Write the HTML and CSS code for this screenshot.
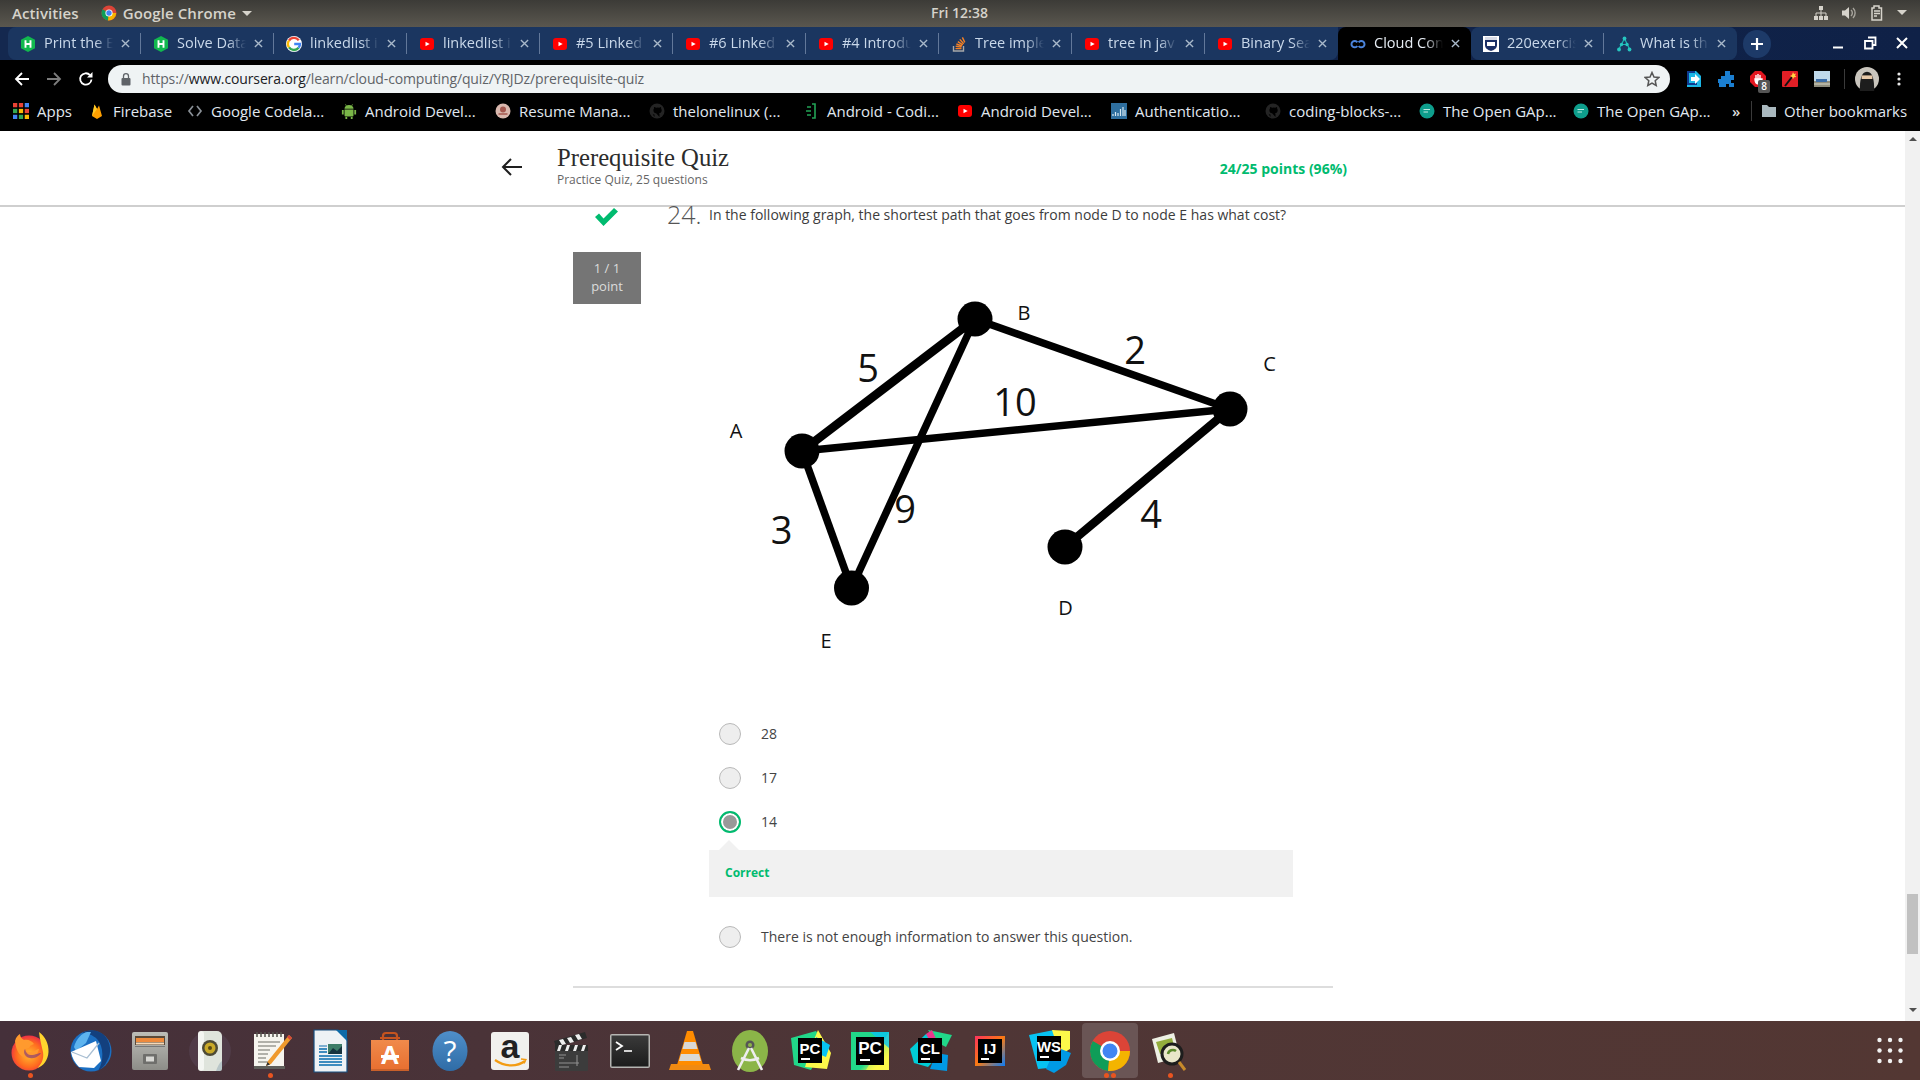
FILE: index.html
```html
<!DOCTYPE html>
<html lang="en">
<head>
<meta charset="utf-8">
<title>Prerequisite Quiz</title>
<link rel="stylesheet" href="styles.css">
</head>
<body>
<svg class="sprite" aria-hidden="true">
  <defs>
    <linearGradient id="pc2" x1="0" y1="0" x2="1" y2="1"><stop offset="0" stop-color="#21d789"/><stop offset=".6" stop-color="#21d789"/><stop offset=".8" stop-color="#fcf84a"/></linearGradient>
    <linearGradient id="ij" x1="0" y1="0" x2="1" y2="1"><stop offset="0" stop-color="#fe315d"/><stop offset=".5" stop-color="#f97a12"/><stop offset="1" stop-color="#087cfa"/></linearGradient>
    <radialGradient id="fx" cx=".5" cy=".55" r=".6"><stop offset="0" stop-color="#ffbd2e"/><stop offset=".6" stop-color="#ff6a1f"/><stop offset="1" stop-color="#e8204f"/></radialGradient>
    <linearGradient id="cab" x1="0" y1="0" x2="0" y2="1"><stop offset="0" stop-color="#bdbdb8"/><stop offset="1" stop-color="#8d8d88"/></linearGradient>
    <linearGradient id="shop" x1="0" y1="0" x2="0" y2="1"><stop offset="0" stop-color="#f08a4b"/><stop offset="1" stop-color="#e86f30"/></linearGradient>
    <linearGradient id="help" x1="0" y1="0" x2="0" y2="1"><stop offset="0" stop-color="#4f8fca"/><stop offset="1" stop-color="#2f6ca6"/></linearGradient>
    <linearGradient id="term" x1="0" y1="0" x2="0" y2="1"><stop offset="0" stop-color="#3a3a3a"/><stop offset="1" stop-color="#1c1c1c"/></linearGradient>
    <symbol id="i-hack" viewBox="0 0 16 16"><polygon points="8,0 15,3.800 15,12.200 8,16 1,12.200 1,3.800" fill="#12b84f"/><path d="M5.500 4.200v7.600M10.500 4.200v7.600M5.500 8h5" stroke="#fff" stroke-width="1.900" fill="none"/></symbol>
    <symbol id="i-g" viewBox="0 0 16 16"><circle cx="8" cy="8" r="8" fill="#fff"/><path d="M12.800 4.300A6 6 0 0 0 3 4.600" fill="none" stroke="#ea4335" stroke-width="2.400"/><path d="M3 4.600a6 6 0 0 0 0 6.800" fill="none" stroke="#fbbc05" stroke-width="2.400"/><path d="M3 11.400a6 6 0 0 0 9.600.4" fill="none" stroke="#34a853" stroke-width="2.400"/><path d="M12.600 11.800A6 6 0 0 0 14 8H8.200" fill="none" stroke="#4285f4" stroke-width="2.400"/></symbol>
    <symbol id="i-yt" viewBox="0 0 16 16"><rect x="1" y="2" width="14" height="12" rx="3" fill="#f00"/><polygon points="6.500,5.700 10.700,8 6.500,10.300" fill="#fff"/></symbol>
    <symbol id="i-so" viewBox="0 0 16 16"><path d="M2.500 10v5h10v-5" fill="none" stroke="#a8a8a8" stroke-width="1.400"/><path d="M4.500 12.600h6M4.700 10.300l5.800.8M5.400 8l5.500 2M6.800 5.600l5 3.200M8.800 3.400l3.900 4.400M11.400 1.400l2.400 5" fill="none" stroke="#f48024" stroke-width="1.400"/></symbol>
    <symbol id="i-cc" viewBox="0 0 16 16"><path d="M7.300 6.300A3.200 3.200 0 1 0 7.300 10M8.700 10a3.200 3.200 0 1 0 0-3.700" fill="none" stroke="#4b83da" stroke-width="2"/></symbol>
    <symbol id="i-crest" viewBox="0 0 16 16"><rect width="16" height="16" fill="#fff"/><path d="M2 1h12v8c0 3.500-3 5-6 6-3-1-6-2.500-6-6z" fill="#1a2f66"/><path d="M2 1h12v3H2z" fill="#d8dbe6"/><path d="M4 6h8v4H4z" fill="#fff"/></symbol>
    <symbol id="i-what" viewBox="0 0 16 16"><path d="M8.500 2.500 3 13M8.500 2.500 13.500 13M5.500 8.500l5 0" fill="none" stroke="#1bb5b0" stroke-width="1.200"/><circle cx="8.500" cy="2.500" r="1.900" fill="#26c6c0"/><circle cx="5.500" cy="8.500" r="1.700" fill="#26c6c0"/><circle cx="11" cy="8.500" r="1.700" fill="#26c6c0"/><circle cx="3" cy="13.500" r="1.900" fill="#26c6c0"/><circle cx="13.500" cy="13.500" r="1.900" fill="#26c6c0"/></symbol>
    <symbol id="i-gh" viewBox="0 0 16 16"><circle cx="8" cy="8" r="7.500" fill="#242424"/><path d="M5.500 14v-2.500c-1.800.3-2.300-.8-2.600-1.400M10.500 14v-2.500c0-.7-.2-1-.5-1.300 1.600-.2 2.700-1 2.700-3 0-.7-.2-1.200-.6-1.700.1-.5 0-1.100-.1-1.500-.6 0-1.100.3-1.700.7a6 6 0 0 0-3 0C6.200 4.300 5.700 4 5.100 4c-.1.400-.2 1-.1 1.500-.4.500-.6 1-.6 1.700 0 2 1.100 2.800 2.700 3" fill="#000"/></symbol>
    <symbol id="i-gap" viewBox="0 0 16 16"><circle cx="8" cy="8" r="7.500" fill="#0e9e8c"/><path d="M4.500 6.500h6.500M4.500 9h4.500" stroke="#bfe9e2" stroke-width="1.200"/></symbol>
    <symbol id="i-android" viewBox="0 0 16 16"><path d="M3.500 6.500h9v6a1 1 0 0 1-1 1h-7a1 1 0 0 1-1-1z" fill="#7ab648"/><path d="M3.500 5.800a4.500 3.800 0 0 1 9 0z" fill="#7ab648"/><path d="M5.300 14v2M10.700 14v2M1.800 7v4.500M14.200 7v4.500" stroke="#7ab648" stroke-width="1.800"/><path d="M5.300 2.800 4.500 1.300M10.700 2.800l.8-1.500" stroke="#7ab648" stroke-width=".8"/></symbol>
    <symbol id="i-close" viewBox="0 0 10 10"><path d="M1 1l8 8M9 1l-8 8" stroke="#a9b9ca" stroke-width="1.500" fill="none"/></symbol>
    <symbol id="i-jb" viewBox="0 0 48 48"><rect x="12" y="11" width="24" height="25" fill="#000"/><rect x="15" y="31" width="9" height="2" fill="#fff"/></symbol>
  </defs>
</svg>

<header class="os-bar">
  <div class="os-left">
    <span class="os-activities">Activities</span>
    <span class="os-app">
      <svg class="i16" viewBox="0 0 16 16"><circle cx="8" cy="8" r="7.500" fill="#db4437"/><path d="M8 8 1.500 4.200A7.500 7.500 0 0 0 7 15.400z" fill="#0f9d58"/><path d="M8 8h7.200A7.500 7.500 0 0 1 7 15.400z" fill="#f4b400"/><circle cx="8" cy="8" r="3.600" fill="#fff"/><circle cx="8" cy="8" r="2.700" fill="#4285f4"/></svg>
      Google Chrome
      <span class="caret"></span>
    </span>
  </div>
  <span class="os-clock">Fri 12:38</span>
  <div class="os-right">
    <svg class="i16" viewBox="0 0 16 16"><path d="M6 1h4v4H6zM1 11h4v4H1zM6 11h4v4H6zM11 11h4v4h-4z" fill="#d6d3cb"/><path d="M8 5v6M3 11V8h10v3" stroke="#d6d3cb" fill="none"/></svg>
    <svg class="i16" viewBox="0 0 16 16"><path d="M1 5.500h3L8 2v12L4 10.500H1z" fill="#d6d3cb"/><path d="M10 5a4 4 0 0 1 0 6M12 3a7 7 0 0 1 0 10" stroke="#a8a59d" stroke-width="1.400" fill="none"/></svg>
    <svg class="i16" viewBox="0 0 16 16"><path d="M5 1h5v2h2.500v12H3V3h2z" fill="none" stroke="#d6d3cb" stroke-width="1.500"/><path d="M5 6h6M5 8.500h6M5 11h3" stroke="#d6d3cb" stroke-width="1.300"/></svg>
    <span class="caret"></span>
  </div>
</header>

<nav class="tabstrip">
  <div class="tab"><svg class="i16"><use href="#i-hack"/></svg><span class="tab-title">Print the E</span><svg class="tab-x"><use href="#i-close"/></svg></div>
  <div class="tab"><svg class="i16"><use href="#i-hack"/></svg><span class="tab-title">Solve Data</span><svg class="tab-x"><use href="#i-close"/></svg></div>
  <div class="tab"><svg class="i16"><use href="#i-g"/></svg><span class="tab-title">linkedlist i</span><svg class="tab-x"><use href="#i-close"/></svg></div>
  <div class="tab"><svg class="i16"><use href="#i-yt"/></svg><span class="tab-title">linkedlist i</span><svg class="tab-x"><use href="#i-close"/></svg></div>
  <div class="tab"><svg class="i16"><use href="#i-yt"/></svg><span class="tab-title">#5 Linked</span><svg class="tab-x"><use href="#i-close"/></svg></div>
  <div class="tab"><svg class="i16"><use href="#i-yt"/></svg><span class="tab-title">#6 Linked</span><svg class="tab-x"><use href="#i-close"/></svg></div>
  <div class="tab"><svg class="i16"><use href="#i-yt"/></svg><span class="tab-title">#4 Introdu</span><svg class="tab-x"><use href="#i-close"/></svg></div>
  <div class="tab"><svg class="i16"><use href="#i-so"/></svg><span class="tab-title">Tree imple</span><svg class="tab-x"><use href="#i-close"/></svg></div>
  <div class="tab"><svg class="i16"><use href="#i-yt"/></svg><span class="tab-title">tree in jav</span><svg class="tab-x"><use href="#i-close"/></svg></div>
  <div class="tab tab-before"><svg class="i16"><use href="#i-yt"/></svg><span class="tab-title">Binary Sea</span><svg class="tab-x"><use href="#i-close"/></svg></div>
  <div class="tab tab-active"><svg class="i16"><use href="#i-cc"/></svg><span class="tab-title">Cloud Con</span><svg class="tab-x"><use href="#i-close"/></svg></div>
  <div class="tab tab-after"><svg class="i16"><use href="#i-crest"/></svg><span class="tab-title">220exercis</span><svg class="tab-x"><use href="#i-close"/></svg></div>
  <div class="tab tab-last"><svg class="i16"><use href="#i-what"/></svg><span class="tab-title">What is th</span><svg class="tab-x"><use href="#i-close"/></svg></div>
  <div class="newtab"><svg class="i14" viewBox="0 0 14 14"><path d="M7 1v12M1 7h12" stroke="#fff" stroke-width="2.200"/></svg></div>
  <div class="winctl">
    <svg class="i16" viewBox="0 0 16 16"><path d="M3 12.500h10" stroke="#fff" stroke-width="2"/></svg>
    <svg class="i16" viewBox="0 0 16 16"><path d="M6 2.500h7.500V10H11M3 6h7.500v7.500H3z" fill="none" stroke="#fff" stroke-width="1.800"/></svg>
    <svg class="i16" viewBox="0 0 16 16"><path d="M3 3l10 10M13 3 3 13" stroke="#fff" stroke-width="2"/></svg>
  </div>
</nav>

<div class="toolbar">
  <span class="tool"><svg class="i16" viewBox="0 0 16 16"><path d="M15 8H2M8 2 2 8l6 6" fill="none" stroke="#fff" stroke-width="1.800"/></svg></span>
  <span class="tool"><svg class="i16" viewBox="0 0 16 16"><path d="M1 8h13M8 2l6 6-6 6" fill="none" stroke="#7d7d7d" stroke-width="1.800"/></svg></span>
  <span class="tool"><svg class="i16" viewBox="0 0 16 16"><path d="M13.500 8.500A5.700 5.700 0 1 1 12 4.100" fill="none" stroke="#fff" stroke-width="1.800"/><path d="M14.500 1v5.500H9z" fill="#fff"/></svg></span>
  <div class="omnibox">
    <svg class="lock" viewBox="0 0 12 14"><rect x="1.500" y="6" width="9" height="7.500" rx="1" fill="#5f6368"/><path d="M3.500 6V4.200a2.500 2.500 0 0 1 5 0V6" fill="none" stroke="#5f6368" stroke-width="1.300"/></svg>
    <span class="url"><span class="url-dim">https://</span>www.coursera.org<span class="url-dim">/learn/cloud-computing/quiz/YRJDz/prerequisite-quiz</span></span>
    <svg class="star" viewBox="0 0 16 16"><path d="M8 1.500 10 6l4.800.5-3.600 3.200 1 4.800L8 12l-4.200 2.500 1-4.800L1.200 6.500 6 6z" fill="none" stroke="#555" stroke-width="1.500"/></svg>
  </div>
  <div class="exts">
    <span class="ext"><svg class="i16" viewBox="0 0 16 16"><path d="M1 0h9l5 5v11H1z" fill="#1bb6e6"/><path d="M1 0h8v2H3v10h8v2H1z" fill="#0e3a8f"/><path d="M5 6h4V3l5 5-5 5v-3H5z" fill="#fff"/></svg></span>
    <span class="ext"><svg class="i16" viewBox="0 0 16 16"><path d="M7 0h5v4h4v5h-3v3h3v4h-5v-3H8v3H1v-4H0V8h3V5h4z" fill="#1b7fd1"/></svg></span>
    <span class="ext ext-badge"><svg class="i16" viewBox="0 0 16 16"><polygon points="5,0 11,0 16,5 16,11 11,16 5,16 0,11 0,5" fill="#e3161f"/><path d="M6 4v5M8 3v6M10 4v5M5 8c0 3 1 5 3.500 5S12 11 12 8z" stroke="#fff" stroke-width="1.400" fill="#fff"/></svg><span class="badge">8</span></span>
    <span class="ext"><svg class="i16" viewBox="0 0 16 16"><rect width="16" height="16" rx="1" fill="#e01f26"/><path d="M3 15 10 6" stroke="#111" stroke-width="2"/><path d="M11 1l1 2 2-.5-1 2 1.500 1.500-2.500.2-1 2-.8-2.300L8 5l2-1z" fill="#ffd23f"/></svg></span>
    <span class="ext"><svg class="i16" viewBox="0 0 16 16"><rect width="16" height="16" fill="#bfd9ea"/><path d="M0 10h16v6H0z" fill="#8f8d7d"/><path d="M2 8h11v3H2z" fill="#3c6ea8"/><path d="M0 13h16" stroke="#d8d8c8"/></svg></span>
    <span class="ext-sep"></span>
    <span class="ext"><svg class="i20" viewBox="0 0 20 20"><circle cx="10" cy="10" r="10" fill="#c9c5bd"/><path d="M4 20c0-9 1-16 6-16s6 7 6 16z" fill="#1d1d1d"/><rect x="5.500" y="7" width="9" height="3" fill="#e8c9a8"/></svg></span>
    <span class="ext"><svg class="i16" viewBox="0 0 16 16"><circle cx="8" cy="3" r="1.600" fill="#e8e8e8"/><circle cx="8" cy="8" r="1.600" fill="#e8e8e8"/><circle cx="8" cy="13" r="1.600" fill="#e8e8e8"/></svg></span>
  </div>
</div>

<div class="bookmarks">
  <span class="bm bm-apps"><svg class="i16" viewBox="0 0 15 15"><rect width="4" height="4" fill="#ea4335"/><rect x="5.500" width="4" height="4" fill="#ea4335"/><rect x="11" width="4" height="4" fill="#4285f4"/><rect y="5.500" width="4" height="4" fill="#34a853"/><rect x="5.500" y="5.500" width="4" height="4" fill="#fbbc05"/><rect x="11" y="5.500" width="4" height="4" fill="#ea4335"/><rect y="11" width="4" height="4" fill="#4285f4"/><rect x="5.500" y="11" width="4" height="4" fill="#34a853"/><rect x="11" y="11" width="4" height="4" fill="#fbbc05"/></svg>Apps</span>
  <span class="bm bm-fire"><svg class="i16" viewBox="0 0 16 16"><path d="M3 13 5.500 1.500 8 6l2-3.500L13 13l-5 3z" fill="#ffa000"/><path d="M3 13 5.500 1.500 8 6z" fill="#ffca28"/></svg>Firebase</span>
  <span class="bm"><svg class="i16" viewBox="0 0 16 16"><path d="M6 3 2 8l4 5M10 3l4 5-4 5" fill="none" stroke="#8a9097" stroke-width="1.700"/></svg>Google Codela...</span>
  <span class="bm"><svg class="i16"><use href="#i-android"/></svg>Android Devel...</span>
  <span class="bm"><svg class="i16" viewBox="0 0 16 16"><circle cx="8" cy="8" r="7.500" fill="#d9b8ae"/><circle cx="8" cy="6.500" r="3" fill="#a3574e"/><path d="M3.500 11h9" stroke="#a3574e" stroke-width="1.500"/></svg>Resume Mana...</span>
  <span class="bm"><svg class="i16"><use href="#i-gh"/></svg>thelonelinux (...</span>
  <span class="bm"><svg class="i16" viewBox="0 0 16 16"><path d="M9 1h3v14H9M4 4h4M3 8h5M4 12h4" fill="none" stroke="#22a356" stroke-width="1.600"/></svg>Android - Codi...</span>
  <span class="bm"><svg class="i16"><use href="#i-yt"/></svg>Android Devel...</span>
  <span class="bm"><svg class="i16" viewBox="0 0 16 16"><rect width="16" height="16" fill="#2f6f9f"/><path d="M2 13V11M4.500 13V9M7 13V10M9.500 13V6M12 13V4M14 13V7" stroke="#d7e8f2" stroke-width="1.200"/></svg>Authenticatio...</span>
  <span class="bm"><svg class="i16"><use href="#i-gh"/></svg>coding-blocks-...</span>
  <span class="bm"><svg class="i16"><use href="#i-gap"/></svg>The Open GAp...</span>
  <span class="bm"><svg class="i16"><use href="#i-gap"/></svg>The Open GAp...</span>
  <span class="bm-more">»</span>
  <span class="bm-sep"></span>
  <span class="bm bm-other"><svg class="i16" viewBox="0 0 16 16"><path d="M1 2h5l2 2h7v10H1z" fill="#a9b8be"/></svg>Other bookmarks</span>
</div>

<div class="viewport">
  <main class="page">
    <div class="quiz-head">
      <div class="quiz-head-in">
        <svg class="back" viewBox="0 0 24 24"><path d="M22 12H3M11 4l-8 8 8 8" fill="none" stroke="#1f1f1f" stroke-width="2"/></svg>
        <div class="quiz-title">
          <h1>Prerequisite Quiz</h1>
          <p>Practice Quiz, 25 questions</p>
        </div>
        <span class="quiz-points">24/25 points (96%)</span>
      </div>
    </div>
    <div class="quiz">
      <section class="question">
        <div class="q-side">
          <svg class="check" viewBox="0 0 23 18"><path d="M0 9 4 5.500l4.500 5L19 0l4 3.500L8.500 18z" fill="#00bb6f"/></svg>
          <div class="q-score">1 / 1<br>point</div>
        </div>
        <div class="q-main">
          <div class="q-head">
            <span class="q-num">24.</span>
            <span class="q-text">In the following graph, the shortest path that goes from node D to node E has what cost?</span>
          </div>
          <svg class="graph" width="585" height="472" viewBox="708 240 585 472">
            <g stroke="#000" stroke-width="7.500">
              <path class="g-thick" d="M802 451 975 319"/>
              <path d="M975 319 1230 409"/>
              <path d="M802 451 1230 409"/>
              <path d="M802 451 851.500 588"/>
              <path d="M975 319 851.500 588"/>
              <path class="g-thick" d="M1230 409 1065 547"/>
            </g>
            <g fill="#000">
              <circle cx="802" cy="451" r="17.500"/>
              <circle cx="975" cy="319" r="17.500"/>
              <circle cx="1230" cy="409" r="17.500"/>
              <circle cx="851.500" cy="588" r="17.500"/>
              <circle cx="1065" cy="547" r="17.500"/>
            </g>
            <g class="g-label" text-anchor="middle">
              <text x="736" y="438">A</text>
              <text x="1024" y="320">B</text>
              <text x="1269.500" y="371">C</text>
              <text x="1065.500" y="615">D</text>
              <text x="826" y="648">E</text>
            </g>
            <g class="g-num" text-anchor="middle">
              <text x="868" y="382">5</text>
              <text x="1135" y="364">2</text>
              <text x="1015" y="416">10</text>
              <text x="905" y="523">9</text>
              <text x="781.500" y="544">3</text>
              <text x="1151" y="528">4</text>
            </g>
          </svg>
          <div class="opt"><span class="radio"></span><span class="opt-label">28</span></div>
          <div class="opt"><span class="radio"></span><span class="opt-label">17</span></div>
          <div class="opt"><span class="radio radio-on"></span><span class="opt-label">14</span></div>
          <div class="feedback">Correct</div>
          <div class="opt"><span class="radio"></span><span class="opt-label">There is not enough information to answer this question.</span></div>
        </div>
      </section>
      <hr class="q-rule">
    </div>
  </main>
  <aside class="scrollbar">
    <span class="sb-up"></span>
    <span class="sb-thumb"></span>
    <span class="sb-down"></span>
  </aside>
</div>

<footer class="dock">
  <div class="dk run1"><svg viewBox="0 0 48 48"><circle cx="23" cy="26" r="17.500" fill="url(#fx)"/><path d="M33 5c6 4 10 12 9.500 20-.5 8-5 14-11 16 5-5 7-11 5-18-1-5-3-12-3.500-18z" fill="#ffd52e"/><path d="M9 14c1-4 3-6 5-7 0 3 2 5 4 6 4-1 8 1 10 4l-4 2c0 2-3 3-5 3 0 2 2 3 5 3 5 0 6-3 9-3-1 5-5 9-11 9-7 0-12-6-13-17z" fill="#ff9a2e"/><path d="M19 22c-2 2-1 8 5 9 5 1 9-2 11-5-3 0-5 2-10 2-3 0-5-2-6-6z" fill="#6a2a8c" opacity=".55"/></svg></div>
  <div class="dk"><svg viewBox="0 0 48 48"><circle cx="25" cy="24" r="20.500" fill="#1b6fc2"/><path d="M16 6c6-4 16-4 22 2 7 7 8 18 3 26-2 5-6 8-9 10 6-9 6-25-1-32-4-4-10-6-15-6z" fill="#13407e"/><path d="M21 5c-5 1-11 7-13 15l2 4 10-8 5-11z" fill="#5db4ef"/><path d="M5 25 30 14l5 20-7 7-15-1C9 36 6 31 5 25z" fill="#fff"/><path d="M6 25l15 6 12-15" fill="none" stroke="#a9bfd3" stroke-width="1.300"/></svg></div>
  <div class="dk"><svg viewBox="0 0 48 48"><rect x="6" y="5" width="36" height="38" rx="2" fill="url(#cab)"/><rect x="9" y="9" width="30" height="9" fill="#5b4a3a"/><rect x="10" y="11" width="28" height="4" fill="#ef8a3c"/><rect x="10" y="15.500" width="28" height="2" fill="#f7d9b8"/><rect x="9" y="19" width="30" height="1" fill="#777"/><rect x="17" y="27" width="14" height="10" rx="1" fill="#6f6f6c"/><rect x="20" y="29.500" width="8" height="5" fill="#d8d8d4"/></svg></div>
  <div class="dk"><svg viewBox="0 0 48 48"><ellipse cx="24" cy="24" rx="21" ry="20" fill="#5a4a5a" opacity=".45"/><rect x="12" y="4" width="24" height="40" rx="5" fill="#dfe4dc"/><rect x="12" y="4" width="6" height="40" rx="3" fill="#f4f6f2"/><circle cx="24" cy="21" r="8" fill="#4d4a35"/><circle cx="24" cy="21" r="5.500" fill="#c9a928"/><circle cx="24" cy="21" r="2" fill="#5a4a12"/><path d="M30 44c2-5 3-8 6-10v8a2 2 0 0 1-2 2z" fill="#b8c6c8"/></svg></div>
  <div class="dk run1"><svg viewBox="0 0 48 48"><rect x="8" y="7" width="30" height="34" fill="#f6f5ee"/><rect x="8" y="39" width="31" height="3" fill="#5f5f5a"/><path d="M11 5v5M15 5v5M19 5v5M23 5v5M27 5v5M31 5v5M35 5v5" stroke="#55544e" stroke-width="1.500"/><path d="M12 15h22M12 19h18M12 23h12M12 27h10M12 31h8M12 35h12" stroke="#9a9a92" stroke-width="1.300"/><path d="M43 8 22 34l-2 5 5-2 21-26z" fill="#ef9a2c"/><path d="M43 8l3 3-2 2-3-3z" fill="#d8473a"/><path d="M20 39l1.500-4 2.500 2.500z" fill="#333"/></svg></div>
  <div class="dk"><svg viewBox="0 0 48 48"><path d="M8 3h24l9 9v33H8z" fill="#eef2f5" stroke="#174f80" stroke-width="1.200"/><path d="M30 3h11v11z" fill="#0d6aa8"/><rect x="13" y="18" width="8" height="2" fill="#7fb0d2"/><rect x="22" y="17" width="14" height="10" fill="#3d7d68"/><path d="M22 27l5-6 4 3 5-5v8z" fill="#16333f"/><path d="M13 22h8M13 25h8M13 29h23M13 32h23M13 35h23M13 38h23" stroke="#3f8dbf" stroke-width="1.800"/></svg></div>
  <div class="dk"><svg viewBox="0 0 48 48"><path d="M17 13V9a3 3 0 0 1 3-3h8a3 3 0 0 1 3 3v4" fill="none" stroke="#c6541f" stroke-width="2.200"/><rect x="14" y="10" width="20" height="2" fill="#c6541f"/><path d="M5 13h38v30H5z" fill="url(#shop)"/><text x="24" y="37" class="dk-shop" text-anchor="middle">A</text><path d="M15 28h18v3H15z" fill="#fff"/><path d="M5 42h38v2H5z" fill="#c9602a"/></svg></div>
  <div class="dk"><svg viewBox="0 0 48 48"><ellipse cx="24" cy="24" rx="17.500" ry="20" fill="url(#help)"/><text x="24" y="35" class="dk-help" text-anchor="middle">?</text></svg></div>
  <div class="dk"><svg viewBox="0 0 48 48"><rect x="5" y="5" width="38" height="38" rx="3" fill="#f1f1ee"/><text x="24" y="31" class="dk-az" text-anchor="middle">a</text><path d="M9 33c10 7 22 7 30 1" fill="none" stroke="#f39c12" stroke-width="2.200"/><path d="M35 32l5 .5-2 4" fill="none" stroke="#f39c12" stroke-width="1.300"/></svg></div>
  <div class="dk"><svg viewBox="0 0 48 48"><rect x="9" y="18" width="33" height="26" rx="1" fill="#3c3c3c"/><path d="M8 14 39 5l2 6-31 9z" fill="#2b2b2b"/><path d="M13 13l3 5 4-1-3-5zM21 11l3 5 4-1-3-5zM29 8l3 5 4-1-3-5z" fill="#eee"/><rect x="9" y="18" width="33" height="6" fill="#2b2b2b"/><path d="M13 18l-2 6h3l2-6zM21 18l-2 6h3l2-6zM29 18l-2 6h3l2-6zM37 18l-2 6h3l2-6z" fill="#eee"/><path d="M13 28h7M13 31h5M13 36h20M13 40h10M31 28v11" stroke="#8f8f8f" stroke-width="1.100"/></svg></div>
  <div class="dk"><svg viewBox="0 0 48 48"><rect x="4" y="7" width="40" height="34" rx="2" fill="#b5b5b2"/><rect x="5.500" y="8.500" width="37" height="31" fill="url(#term)"/><path d="M10 15l6 4-6 4" fill="none" stroke="#fff" stroke-width="1.800"/><path d="M18 24h8" stroke="#fff" stroke-width="1.600"/></svg></div>
  <div class="dk"><svg viewBox="0 0 48 48"><path d="M5 37h38l2 6H3z" fill="#f08a12"/><path d="M21 4h6l10 34H11z" fill="#ff8c00"/><path d="M18.500 15h11l2 7h-15z" fill="#d9d9d6"/><path d="M15 27h18l2 7H13z" fill="#d9d9d6"/></svg></div>
  <div class="dk"><svg viewBox="0 0 48 48"><ellipse cx="24" cy="24" rx="18" ry="21" fill="#8bb548"/><circle cx="24" cy="18" r="4.500" fill="#555"/><circle cx="24" cy="18" r="2" fill="#8bb548"/><path d="M23 21 12 43M25 21l11 22M15 31c6 3 12 3 18 0" fill="none" stroke="#eee" stroke-width="2.600"/></svg></div>
  <div class="dk"><svg viewBox="0 0 48 48"><polygon points="5,11 30,4 41,20 32,30 25,43 8,38" fill="#21d789"/><polygon points="32,3 45,26 41,42 19,40 25,20" fill="#fcf84a"/><polygon points="30,10 44,18 40,30 30,26" fill="#07c3f2"/><use href="#i-jb"/><text x="24" y="27" class="dk-jb" text-anchor="middle">PC</text></svg></div>
  <div class="dk"><svg viewBox="0 0 48 48"><rect x="5" y="5" width="38" height="38" fill="url(#pc2)"/><path d="M43 5v38H20z" fill="#fcf84a" opacity=".7"/><path d="M24 5h19v16z" fill="#07c3f2" opacity=".8"/><rect x="10" y="10" width="28" height="28" fill="#000"/><rect x="14" y="32" width="10" height="2" fill="#fff"/><text x="24" y="27" class="dk-jb dk-jb-lg" text-anchor="middle">PC</text></svg></div>
  <div class="dk"><svg viewBox="0 0 48 48"><polygon points="4,22 20,7 30,6 33,28 22,40 8,36" fill="#00cdd7"/><polygon points="22,3 46,8 40,20 30,15" fill="#21d789"/><polygon points="20,7 26,3 30,12 24,14" fill="#ed358c"/><polygon points="30,26 42,28 41,44 24,42" fill="#009ae5"/><use href="#i-jb"/><text x="24" y="27" class="dk-jb" text-anchor="middle">CL</text></svg></div>
  <div class="dk"><svg viewBox="0 0 48 48"><rect x="9" y="9" width="30" height="30" fill="url(#ij)"/><rect x="12" y="12" width="24" height="24" fill="#000"/><text x="24" y="27" class="dk-jb" text-anchor="middle">IJ</text><rect x="15" y="31" width="8" height="2" fill="#fff"/></svg></div>
  <div class="dk"><svg viewBox="0 0 48 48"><polygon points="3,8 28,3 32,40 12,42" fill="#07c3f2"/><polygon points="26,3 44,4 44,22 34,28" fill="#fcf84a"/><polygon points="30,20 45,26 40,38 28,46 20,42" fill="#009ae5"/><use href="#i-jb" x="-1" y="-2"/><text x="23" y="25" class="dk-jb" text-anchor="middle">WS</text></svg></div>
  <div class="dk dk-on run2"><svg viewBox="0 0 48 48"><circle cx="24" cy="24" r="20" fill="#db4437"/><path d="M24 24 6.800 14A20 20 0 0 0 22 44z" fill="#0f9d58"/><path d="M24 24h20A20 20 0 0 1 22 44z" fill="#f4b400"/><circle cx="24" cy="24" r="10" fill="#fff"/><circle cx="24" cy="24" r="7.500" fill="#4285f4"/></svg></div>
  <div class="dk run1"><svg viewBox="0 0 48 48"><path d="M6 12 28 6l6 24-22 6z" fill="#eef0e4"/><path d="M10 15l16-4 3 12-15 4z" fill="#93ad3c"/><circle cx="26" cy="27" r="10" fill="#e9e6c9" stroke="#1d1d1d" stroke-width="3"/><path d="M22 27a5 5 0 0 1 8-3" fill="none" stroke="#5c8a2c" stroke-width="2.500"/><path d="M33 35l6 8" stroke="#c78a2a" stroke-width="3"/></svg></div>
  <div class="dk-grid"><svg width="32" height="32" viewBox="0 0 32 32"><g fill="#f2f2f2"><circle cx="5.500" cy="5" r="2.200"/><circle cx="16" cy="5" r="2.200"/><circle cx="26.500" cy="5" r="2.200"/><circle cx="5.500" cy="15.500" r="2.200"/><circle cx="16" cy="15.500" r="2.200"/><circle cx="26.500" cy="15.500" r="2.200"/><circle cx="5.500" cy="26" r="2.200"/><circle cx="16" cy="26" r="2.200"/><circle cx="26.500" cy="26" r="2.200"/></g></svg></div>
</footer>
</body>
</html>
```
FILE: styles.css
```css
* { box-sizing: border-box; }
html, body { margin: 0; padding: 0; }
body {
  width: 1920px;
  height: 1080px;
  overflow: hidden;
  display: flex;
  flex-direction: column;
  font-family: "Open Sans", "Noto Sans", sans-serif;
  font-size: 14px;
  color: #3c3c3c;
  background: #fff;
}
svg { display: block; flex: none; }
.sprite { position: absolute; width: 0; height: 0; }
.i14 { width: 14px; height: 14px; }
.i16 { width: 16px; height: 16px; }
.i20 { width: 24px; height: 24px; }

/* OS bar */
.os-bar {
  height: 27px;
  flex: none;
  display: grid;
  grid-template-columns: 1fr auto 1fr;
  align-items: center;
  padding: 0 13px 2px 12px;
  background: linear-gradient(#3c3b37, #5a574f);
  color: #d6d3cb;
  font-weight: 600;
  font-size: 14px;
}
.os-left { display: flex; align-items: center; gap: 22px; font-size: 15px; padding-top: 1px; letter-spacing: 0.1px; }
.os-app { display: flex; align-items: center; gap: 6px; }
.os-right { display: flex; align-items: center; justify-content: flex-end; gap: 12px; }
.caret { width: 0; height: 0; border-left: 5px solid transparent; border-right: 5px solid transparent; border-top: 5px solid #d6d3cb; }

/* Tabs */
.tabstrip {
  height: 35px;
  flex: none;
  display: flex;
  padding-left: 8px;
  padding-bottom: 2px;
  background: linear-gradient(90deg, #14284f, #0f2147);
  box-shadow: inset 0 -2px 0 #000;
}
.tab {
  width: 133px;
  height: 33px;
  flex: none;
  display: flex;
  align-items: center;
  gap: 8px;
  padding: 0 11px 0 12px;
  background: #1b3660;
  color: #c9d8ea;
  position: relative;
}
.tab:first-child { border-top-left-radius: 8px; border-bottom-left-radius: 8px; }
.tab::after { content: ""; position: absolute; right: 0; top: 6px; bottom: 6px; width: 1px; background: #62789a; }
.tab-before { border-bottom-right-radius: 8px; }
.tab-before::after, .tab-active::after, .tab-last::after { display: none; }
.tab-active { background: #000; color: #e8eef5; height: 35px; border-radius: 8px 8px 0 0; padding-bottom: 2px; }
.tab-after { border-bottom-left-radius: 8px; border-top-left-radius: 8px; }
.tab-last { border-top-right-radius: 8px; border-bottom-right-radius: 8px; }
.tab-title {
  flex: 1;
  min-width: 0;
  margin-top: -2px;
  overflow: hidden;
  white-space: nowrap;
  font-size: 14.500px;
  -webkit-mask-image: linear-gradient(90deg, #000 74%, transparent 100%);
  mask-image: linear-gradient(90deg, #000 74%, transparent 100%);
}
.tab-x { width: 9px; height: 9px; }
.newtab {
  width: 28px;
  height: 28px;
  margin: 3px 0 0 6px;
  border-radius: 50%;
  background: #1d3a68;
  display: flex;
  align-items: center;
  justify-content: center;
}
.winctl { margin-left: auto; padding: 8px 10px 0 0; display: flex; gap: 16px; height: 33px; }

/* Toolbar */
.toolbar {
  height: 34px;
  flex: none;
  display: flex;
  align-items: flex-start;
  padding: 3px 0 0 6px;
  background: #000;
}
.tool { width: 32px; height: 28px; display: flex; align-items: center; justify-content: center; }
.omnibox {
  width: 1562px;
  height: 28px;
  margin-left: 6px;
  border-radius: 14px;
  background: #eff3f4;
  display: flex;
  align-items: center;
  padding: 0 10px 0 12px;
  gap: 10px;
}
.lock { width: 12px; height: 14px; }
.url { color: #202124; font-size: 14px; letter-spacing: -0.13px; white-space: nowrap; flex: 1; padding-bottom: 2px; }
.url-dim { color: #5f6368; }
.star { width: 16px; height: 16px; }
.exts { display: flex; align-items: center; height: 28px; margin-left: 8px; }
.ext { width: 32px; height: 28px; display: flex; align-items: center; justify-content: center; position: relative; }
.ext-sep { width: 1px; height: 20px; background: #3a3a3a; margin: 0 6px; }
.badge {
  position: absolute;
  left: 16px;
  top: 15px;
  width: 12px;
  height: 13px;
  border-radius: 2px;
  background: #555;
  color: #fff;
  font-size: 10px;
  line-height: 13px;
  text-align: center;
  font-weight: 600;
}

/* Bookmarks */
.bookmarks {
  height: 35px;
  flex: none;
  display: flex;
  align-items: center;
  padding: 0 0 5px 13px;
  background: #000;
  color: #e0e8f0;
  white-space: nowrap;
  font-size: 15px;
}
.bm { width: 154px; flex: none; display: flex; align-items: center; gap: 8px; overflow: hidden; }
.bm-apps { width: 76px; }
.bm-fire { width: 98px; }
.bm-more { width: 14px; margin: 0 0 0 5px; color: #ddd; font-weight: 600; }
.bm-sep { width: 1px; height: 20px; background: #3a3a3a; margin: 0 9px 0 5px; }
.bm-other { width: auto; gap: 7px; }

/* Page */
.viewport { flex: 1; min-height: 0; display: flex; }
.page { flex: 1; min-width: 0; overflow: hidden; background: #fff; }
.quiz-head { height: 76px; border-bottom: 2px solid #cfcfcf; padding: 10px 0 0 500px; }
.quiz-head-in { width: 847px; display: flex; align-items: center; height: 48px; }
.back { width: 24px; height: 24px; margin: 4px 33px 0 0; }
.quiz-title { flex: 1; }
.quiz-title h1 {
  margin: 0;
  font-family: "Liberation Serif", serif;
  font-weight: 400;
  font-size: 24.700px;
  line-height: 28px;
  color: #2c2c2c;
}
.quiz-title p { margin: 0; font-size: 12px; line-height: 15px; color: #666; }
.quiz-points { color: #00bb6f; font-weight: 700; font-size: 14px; margin-top: 7px; }

.quiz { padding-left: 573px; width: 1333px; }
.question { display: flex; }
.q-side { width: 94px; flex: none; }
.check { width: 23px; height: 18px; margin: 1px 0 0 22px; }
.q-score {
  width: 68px;
  height: 52px;
  margin-top: 26px;
  background: #757575;
  color: #dcdcdc;
  font-size: 13px;
  line-height: 18px;
  text-align: center;
  padding-top: 7px;
}
.q-main { flex: 1; min-width: 0; }
.q-head { display: flex; align-items: flex-start; height: 18px; color: #333; }
.q-num { width: 42px; flex: none; font-size: 25px; font-weight: 300; line-height: 14px; color: #555; }
.q-text { font-size: 14px; line-height: 16px; color: #3c3c3c; }
.graph { margin: 15px 0 0 41px; }
.g-thick { stroke-width: 8.500; }
.g-label text { font-size: 20px; fill: #111; font-family: "Open Sans", sans-serif; }
.g-num text { font-size: 38px; fill: #111; font-family: "Open Sans", sans-serif; }

.opt { height: 44px; display: flex; align-items: center; gap: 20px; padding-left: 52px; color: #444; font-size: 14px; }
.opt-label { margin-top: -2px; }
.radio { width: 22px; height: 22px; flex: none; border-radius: 50%; border: 1px solid #b9b9b9; background: #eee; }
.radio-on { border: 2px solid #00bb6f; background: #999; box-shadow: inset 0 0 0 2px #fff; }
.feedback {
  position: relative;
  width: 584px;
  height: 47px;
  margin: 6px 0 18px 42px;
  background: #f1f1f1;
  color: #00bb6f;
  font-size: 12px;
  font-weight: 700;
  line-height: 45px;
  padding-left: 16px;
}
.feedback::before {
  content: "";
  position: absolute;
  left: 10px;
  top: -10px;
  border-left: 10px solid transparent;
  border-right: 10px solid transparent;
  border-bottom: 10px solid #f1f1f1;
}
.q-rule { width: 760px; height: 2px; border: 0; margin: 27px 0 0; background: #ddd; }

/* Scrollbar */
.scrollbar { width: 15px; flex: none; background: #f1f1f1; display: flex; flex-direction: column; align-items: center; padding-top: 6px; }
.sb-up { width: 0; height: 0; border-left: 4px solid transparent; border-right: 4px solid transparent; border-bottom: 4px solid #505050; }
.sb-thumb { width: 11px; height: 60px; margin-top: 753px; background: #c1c1c1; }
.sb-down { width: 0; height: 0; margin-top: 54px; border-left: 4px solid transparent; border-right: 4px solid transparent; border-top: 4px solid #505050; }

/* Dock */
.dock {
  height: 59px;
  flex: none;
  display: flex;
  align-items: stretch;
  background: linear-gradient(90deg, #45303a, #4f3636 50%, #533733);
  position: relative;
}
.dk { width: 60px; flex: none; display: flex; align-items: center; justify-content: center; position: relative; }
.dk svg { width: 48px; height: 48px; }
.dk-on::before { content: ""; position: absolute; inset: 2px 2px 2px 2px; border-radius: 4px; background: #6a5555; }
.dk-on svg { position: relative; }
.run1::after, .run2::after {
  content: "";
  position: absolute;
  bottom: 2px;
  left: 28px;
  width: 5px;
  height: 5px;
  border-radius: 50%;
  background: #e95420;
}
.run2::after { left: 24px; box-shadow: 7px 0 0 #e95420; }
.dk-help { font-size: 30px; fill: #fff; font-family: "Open Sans", sans-serif; }
.dk-az { font-size: 34px; fill: #222; font-weight: 600; font-family: "Liberation Sans", sans-serif; }
.dk-shop { font-size: 26px; fill: #fff; font-weight: 700; font-family: "Liberation Sans", sans-serif; }
.dk-jb { font-size: 15px; fill: #fff; font-weight: 700; font-family: "Liberation Sans", sans-serif; }
.dk-jb-lg { font-size: 17px; }
.dk-grid { margin-left: auto; width: 32px; margin-right: 14px; display: flex; align-items: center; }
```
